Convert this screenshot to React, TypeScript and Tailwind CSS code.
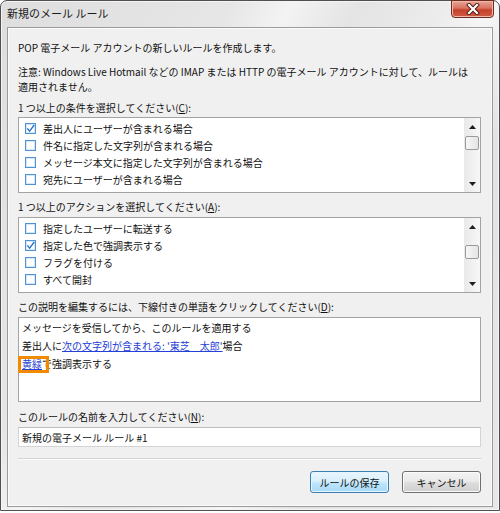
import React from "react";

const font = "font-['Noto_Sans_CJK_JP','Noto_Sans_CJK_SC',sans-serif]";

function Check({ checked }: { checked: boolean }) {
  return (
    <span className="w-[11px] h-[11px] border border-[#4f91d2] bg-white shadow-[inset_0_0_0_1px_#d6e7f8] flex items-center justify-center shrink-0">
      {checked && (
        <svg width="9" height="9" viewBox="0 0 9 9">
          <path d="M1.3 4.4 L3.6 7.1 L8.2 1" fill="none" stroke="#2a72c6" strokeWidth="1.4" />
        </svg>
      )}
    </span>
  );
}

function ScrollBar({ thumbClass }: { thumbClass: string }) {
  return (
    <div className="w-[16px] h-full flex flex-col bg-[linear-gradient(90deg,#e9e9e9,#f7f7f7)] shrink-0">
      <div className="h-[17px] flex items-center justify-center">
        <svg width="7" height="4" viewBox="0 0 7 4">
          <path d="M0 4 L3.5 0 L7 4Z" fill="#1e1e1e" />
        </svg>
      </div>
      <div className="flex-1 flex flex-col">
        <div
          className={
            "h-[14px] mx-[1px] rounded-[2px] border border-[#9a9a9a] bg-[linear-gradient(90deg,#f7f7f7,#e4e4e4)] " +
            thumbClass
          }
        />
      </div>
      <div className="h-[17px] flex items-center justify-center">
        <svg width="7" height="4" viewBox="0 0 7 4">
          <path d="M0 0 L3.5 4 L7 0Z" fill="#1e1e1e" />
        </svg>
      </div>
    </div>
  );
}

function ListBox({
  items,
  thumbClass,
}: {
  items: { text: string; checked: boolean }[];
  thumbClass: string;
}) {
  return (
    <div className="h-[76px] border border-[#a3a3a3] bg-white flex">
      <div className="flex-1 pt-[2px] overflow-hidden">
        {items.map((it, i) => (
          <div key={i} className="h-[17px] flex items-center gap-[7px] pl-[6px]">
            <Check checked={it.checked} />
            <span className="text-[10px] leading-[17px] whitespace-nowrap text-[#111]">{it.text}</span>
          </div>
        ))}
      </div>
      <ScrollBar thumbClass={thumbClass} />
    </div>
  );
}

export default function App() {
  return (
    <div className={"w-[500px] h-[513px] bg-white " + font}>
      <div className="w-[500px] h-[511px] rounded-t-[7px] border border-[#505050] bg-[linear-gradient(118deg,#dedede_0%,#e6e6e6_30%,#f3f3f3_38%,#e4e4e4_47%,#ececec_58%,#f6f6f6_64%,#e3e3e3_74%,#e8e8e8_100%)] shadow-[inset_0_0_0_1px_#f4f4f4] flex flex-col">
        {/* Title bar */}
        <div className="h-[26px] flex items-start shrink-0">
          <div className="pl-[6px] pt-[5px] text-[11px] leading-[14px] text-[#1a1a1a] flex-1">新規のメール ルール</div>
          <div className="mr-[5px] w-[43px] h-[18px] -mt-[1px] rounded-b-[4px] border border-[#6e2b20] bg-[linear-gradient(180deg,#e9a597_0%,#d8725f_45%,#c5412c_55%,#cf5a43_100%)] shadow-[inset_0_0_0_1px_#f0b9ac] flex items-center justify-center">
            <svg width="14" height="12" viewBox="0 0 14 12">
              <path d="M3 2 L11 10 M11 2 L3 10" stroke="#4a1810" strokeWidth="4" strokeLinecap="square" />
              <path d="M3 2 L11 10 M11 2 L3 10" stroke="#ffffff" strokeWidth="2.2" strokeLinecap="square" />
            </svg>
          </div>
        </div>

        {/* Panel */}
        <div className="mx-[6px] h-[480px] border border-[#9b9b9b] bg-[#f0f0f0] shadow-[inset_0_0_0_1px_#fbfbfb] pl-[10px] pr-[11px] flex flex-col text-[10px] text-[#111] shrink-0">
          <div className="mt-[12px] leading-[15px]">POP 電子メール アカウントの新しいルールを作成します。</div>
          <div className="mt-[9px] leading-[15px]">
            注意: Windows Live Hotmail などの IMAP または HTTP の電子メール アカウントに対して、ルールは
            <br />
            適用されません。
          </div>
          <div className="mt-[6px] leading-[15px]">
            1 つ以上の条件を選択してください(<span className="underline">C</span>):
          </div>
          <div className="mt-[2px]">
            <ListBox
              thumbClass="mt-[1px]"
              items={[
                { text: "差出人にユーザーが含まれる場合", checked: true },
                { text: "件名に指定した文字列が含まれる場合", checked: false },
                { text: "メッセージ本文に指定した文字列が含まれる場合", checked: false },
                { text: "宛先にユーザーが含まれる場合", checked: false },
              ]}
            />
          </div>
          <div className="mt-[6px] leading-[15px]">
            1 つ以上のアクションを選択してください(<span className="underline">A</span>):
          </div>
          <div className="mt-[3px]">
            <ListBox
              thumbClass="mt-[10px]"
              items={[
                { text: "指定したユーザーに転送する", checked: false },
                { text: "指定した色で強調表示する", checked: true },
                { text: "フラグを付ける", checked: false },
                { text: "すべて開封", checked: false },
              ]}
            />
          </div>
          <div className="mt-[6px] leading-[15px]">
            この説明を編集するには、下線付きの単語をクリックしてください(<span className="underline">D</span>):
          </div>
          <div className="mt-[3px] h-[85px] border border-[#a3a3a3] bg-white pl-[3px] pt-[1px]">
            <div className="leading-[18px]">メッセージを受信してから、このルールを適用する</div>
            <div className="leading-[18px]">
              差出人に<span className="text-[#2440d6] underline">次の文字列が含まれる: '東芝　太郎'</span>場合
            </div>
            <div className="leading-[18px]">
              <span className="relative text-[#2440d6] underline">
                黄緑
                <span className="absolute -left-[4px] -right-[7px] top-0 -bottom-[2px] border-[3px] border-[#f08a00]" />
              </span>
              で強調表示する
            </div>
          </div>
          <div className="mt-[7px] leading-[15px]">
            このルールの名前を入力してください(<span className="underline">N</span>):
          </div>
          <div className="mt-[3px] h-[20px] border border-[#d4d4d4] border-t-[#bdbdbd] bg-white pl-[3px] flex items-center">
            新規の電子メール ルール #1
          </div>
          <div className="mt-[11px] h-[1px] bg-[#d3d3d3] shadow-[0_1px_0_#fcfcfc]" />
          <div className="mt-[12px] flex justify-end gap-[13px]">
            <button className="w-[79px] h-[22px] rounded-[3px] border border-[#3c7fb1] bg-[linear-gradient(180deg,#eaf6fd_0%,#d9f0fc_45%,#bee6fd_55%,#a7d9f5_100%)] shadow-[inset_0_0_0_1px_#e6f5fd] text-[10px] text-[#111]">
              ルールの保存
            </button>
            <button className="w-[79px] h-[22px] rounded-[3px] border border-[#707070] bg-[linear-gradient(180deg,#f2f2f2_0%,#ebebeb_45%,#dddddd_55%,#cfcfcf_100%)] shadow-[inset_0_0_0_1px_#fbfbfb] text-[10px] text-[#111]">
              キャンセル
            </button>
          </div>
        </div>
      </div>
    </div>
  );
}
